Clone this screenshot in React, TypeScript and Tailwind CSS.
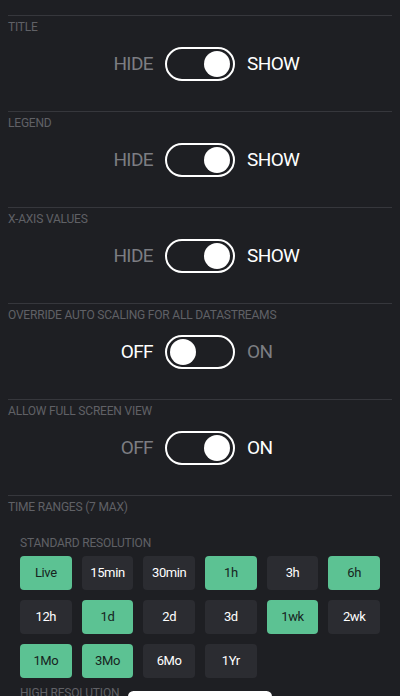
import React from "react";

const font = { fontFamily: "Roboto, 'Liberation Sans', sans-serif" };

function Toggle({ on }: { on: boolean }) {
  return (
    <div
      className={`flex h-[34px] w-[70px] items-center rounded-full border-[2.5px] border-white px-[3px] ${
        on ? "justify-end" : "justify-start"
      }`}
    >
      <div className="h-[26px] w-[26px] rounded-full bg-white" />
    </div>
  );
}

function ToggleSection({
  label,
  left,
  right,
  on,
}: {
  label: string;
  left: string;
  right: string;
  on: boolean;
}) {
  return (
    <div className="mx-2 border-t border-[#36373c] pb-[30px] pt-[5px]">
      <div className="text-[12px] leading-[13px] tracking-[-0.2px] text-[#606166]">{label}</div>
      <div className="mt-[13px] flex items-center justify-center">
        <div
          className={`w-[70px] pr-[12px] text-right text-[19px] leading-[34px] tracking-[-0.6px] ${
            on ? "text-[#7c7d82]" : "text-white"
          }`}
        >
          {left}
        </div>
        <Toggle on={on} />
        <div
          className={`w-[70px] pl-[12px] text-left text-[19px] leading-[34px] tracking-[-0.6px] ${
            on ? "text-white" : "text-[#7c7d82]"
          }`}
        >
          {right}
        </div>
      </div>
    </div>
  );
}

const ranges: [string, boolean][] = [
  ["Live", true],
  ["15min", false],
  ["30min", false],
  ["1h", true],
  ["3h", false],
  ["6h", true],
  ["12h", false],
  ["1d", true],
  ["2d", false],
  ["3d", false],
  ["1wk", true],
  ["2wk", false],
  ["1Mo", true],
  ["3Mo", true],
  ["6Mo", false],
  ["1Yr", false],
];

export default function App() {
  return (
    <div className="relative h-[696px] w-[400px] overflow-hidden bg-[#1e1f23] pt-[15px]" style={font}>
      <ToggleSection label="TITLE" left="HIDE" right="SHOW" on={true} />
      <ToggleSection label="LEGEND" left="HIDE" right="SHOW" on={true} />
      <ToggleSection label="X-AXIS VALUES" left="HIDE" right="SHOW" on={true} />
      <ToggleSection label="OVERRIDE AUTO SCALING FOR ALL DATASTREAMS" left="OFF" right="ON" on={false} />
      <ToggleSection label="ALLOW FULL SCREEN VIEW" left="OFF" right="ON" on={true} />
      <div className="mx-2 border-t border-[#36373c] pt-[5px]">
        <div className="text-[12px] leading-[13px] tracking-[-0.2px] text-[#606166]">TIME RANGES (7 MAX)</div>
      </div>
      <div className="px-5 pt-[23px]">
        <div className="text-[12px] leading-[13px] tracking-[-0.2px] text-[#606166]">STANDARD RESOLUTION</div>
        <div className="mt-[6px] grid grid-cols-6 gap-[10px]">
          {ranges.map(([t, on]) => (
            <div
              key={t}
              className={`flex h-[34px] items-center justify-center rounded-[4px] text-[13px] tracking-[-0.4px] ${
                on ? "bg-[#5cc293] text-[#17241e]" : "bg-[#2b2c31] text-white"
              }`}
            >
              {t}
            </div>
          ))}
        </div>
        <div className="mt-[9px] text-[12px] leading-[13px] tracking-[-0.2px] text-[#606166]">HIGH RESOLUTION</div>
      </div>
      <div className="absolute bottom-[-6px] left-[128px] h-[11px] w-[144px] rounded-full bg-white" />
    </div>
  );
}
